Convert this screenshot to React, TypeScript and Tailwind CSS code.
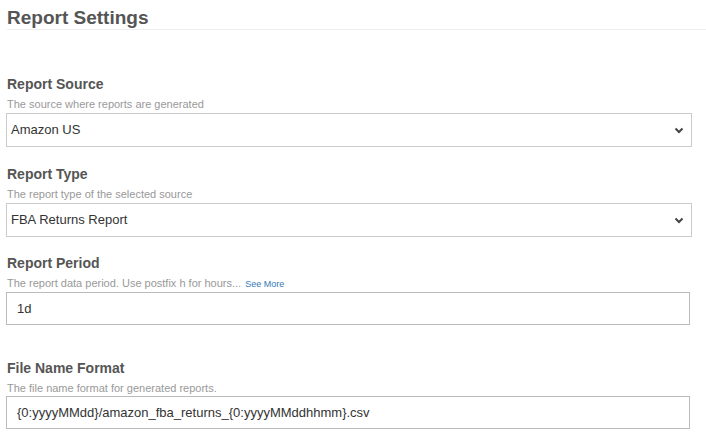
import React from "react";

const ChevronDown = () => (
  <svg width="10" height="7" viewBox="0 0 10 7" className="pointer-events-none absolute right-[7px] top-[13px]">
    <polyline points="1.5,1.5 5,5 8.5,1.5" fill="none" stroke="#444" strokeWidth="2" />
  </svg>
);

const Label = ({ title, desc, link }: { title: string; desc: string; link?: string }) => (
  <div>
    <div className="text-[14px] font-bold leading-[20px] text-[#555]">{title}</div>
    <div className="mt-[3px] text-[11px] leading-[14px] text-[#999]">
      {desc}
      {link && <a className="ml-1 text-[9px] text-[#337ab7]">{link}</a>}
    </div>
  </div>
);

const SelectBox = ({ value }: { value: string }) => (
  <div className="relative mt-[2px] flex h-[34px] w-[686px] items-center border border-[#ccc] bg-white pl-[4px] text-[13px] text-[#333]">
    {value}
    <ChevronDown />
  </div>
);

const InputBox = ({ value }: { value: string }) => (
  <div className="mt-[1px] flex h-[33px] w-[684px] items-center border border-[#bbb] bg-white pl-[10px] text-[13px] text-[#333]">
    {value}
  </div>
);

export default function App() {
  return (
    <div className="h-[433px] w-[706px] overflow-hidden bg-white font-['Liberation_Sans',Arial,sans-serif]">
      <h1 className="ml-[7px] border-b border-[#eee] pt-[7px] text-[19px] font-bold leading-[22px] text-[#555]">
        Report Settings
      </h1>

      <div className="px-[6px]">
        <div className="mt-[44px] ml-[1px]">
          <Label title="Report Source" desc="The source where reports are generated" />
        </div>
        <SelectBox value="Amazon US" />

        <div className="mt-[17px] ml-[1px]">
          <Label title="Report Type" desc="The report type of the selected source" />
        </div>
        <SelectBox value="FBA Returns Report" />

        <div className="mt-[16px] ml-[1px]">
          <Label title="Report Period" desc="The report data period. Use postfix h for hours..." link="See More" />
        </div>
        <InputBox value="1d" />

        <div className="mt-[33px] ml-[1px]">
          <Label title="File Name Format" desc="The file name format for generated reports." />
        </div>
        <InputBox value="{0:yyyyMMdd}/amazon_fba_returns_{0:yyyyMMddhhmm}.csv" />
      </div>
    </div>
  );
}
